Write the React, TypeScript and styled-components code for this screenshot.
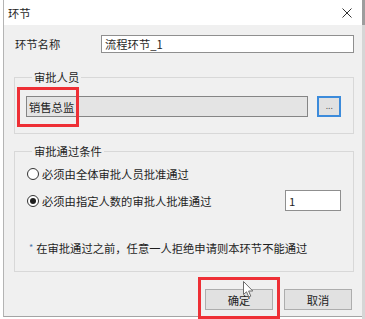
import styled, { createGlobalStyle } from 'styled-components';

const GlobalStyle = createGlobalStyle`
    html, body {
        margin: 0;
        padding: 0;
        background: #fff;
    }
    body {
        font-family: "Noto Sans CJK SC", "Noto Sans", sans-serif;
        font-size: 11.3px;
        color: #1e1e1e;
    }
`;

const Screen = styled.div`
    display: flex;
    width: 365px;
    height: 319px;
    overflow: hidden;
    background: #fff;
`;

const Window = styled.div`
    display: flex;
    flex-direction: column;
    margin-left: 3px;
    width: 359px;
    height: 317px;
    box-sizing: border-box;
    border-left: 1px solid #b4b4b4;
    border-bottom: 1px solid #a4a4a4;
`;

const RightEdge = styled.div`
    width: 3px;
    height: 319px;
    background: linear-gradient(#9d9d9d 0 25px, #d6d6d6 25px);
`;

const TitleBar = styled.div`
    display: flex;
    align-items: center;
    justify-content: space-between;
    height: 25px;
    padding-left: 4px;
    background: #fff;
    line-height: 14px;
`;

const CloseIcon = styled.svg`
    width: 10px;
    height: 10px;
    margin-right: 10px;
`;

const Body = styled.div`
    flex: 1;
    display: flex;
    flex-direction: column;
    padding: 10px 8px 0 10px;
    background: #f0f0f0;
`;

const NameRow = styled.div`
    display: flex;
    align-items: center;
    height: 18px;
`;

const Label = styled.span`
    width: 86px;
    padding-left: 1px;
    line-height: 14px;
`;

const TextInput = styled.div<{ $width?: number }>`
    ${(p) => (p.$width ? `width: ${p.$width}px;` : 'flex: 1;')}
    box-sizing: border-box;
    height: 100%;
    display: flex;
    align-items: center;
    padding-left: 3px;
    background: #fff;
    border: 1px solid #8f8f8f;
    line-height: 14px;
`;

const Group = styled.fieldset<{ $top: number }>`
    margin: ${(p) => p.$top}px 0 0 0;
    min-width: 0;
    border: 1px solid #d8d8d8;
    padding: 0 12px 16px 11px;
`;

const Legend = styled.legend`
    margin-left: 6px;
    padding: 0 2px;
    line-height: 14px;
`;

const FieldRow = styled.div`
    display: flex;
    align-items: center;
    gap: 9px;
    margin-top: 12px;
    height: 21px;
`;

const FieldWrap = styled.div`
    position: relative;
    flex: 1;
    height: 100%;
`;

const ReadonlyField = styled.div`
    box-sizing: border-box;
    height: 100%;
    display: flex;
    align-items: center;
    padding-left: 2px;
    background: #e4e4e4;
    border: 1px solid #858585;
    line-height: 14px;
`;

const Highlight = styled.div<{ $left: number; $top: number; $w: number; $h: number }>`
    position: absolute;
    left: ${(p) => p.$left}px;
    top: ${(p) => p.$top}px;
    width: ${(p) => p.$w}px;
    height: ${(p) => p.$h}px;
    box-sizing: border-box;
    border: 3px solid #ee2f35;
    pointer-events: none;
`;

const BrowseButton = styled.div`
    box-sizing: border-box;
    width: 24px;
    height: 21px;
    display: flex;
    align-items: flex-end;
    justify-content: center;
    padding-bottom: 4px;
    background: #e1e1e1;
    border: 2px solid #3c8bdb;
    color: #555;
    font-family: "DejaVu Sans", sans-serif;
    font-size: 9px;
    line-height: 9px;
    letter-spacing: -0.5px;
`;

const Options = styled.div`
    display: flex;
    flex-direction: column;
    gap: 7px;
    padding-top: 7px;
`;

const OptionRow = styled.div<{ $h: number }>`
    display: flex;
    align-items: center;
    justify-content: space-between;
    height: ${(p) => p.$h}px;
`;

const RadioLabel = styled.label`
    display: flex;
    align-items: center;
    gap: 3px;
    line-height: 14px;
`;

const Radio = styled.span<{ $checked?: boolean }>`
    box-sizing: border-box;
    width: 12px;
    height: 12px;
    margin-left: 1px;
    border-radius: 50%;
    border: 1px solid #333;
    background: #fff;
    display: flex;
    align-items: center;
    justify-content: center;

    &::after {
        content: '';
        width: 6px;
        height: 6px;
        border-radius: 50%;
        background: ${(p) => (p.$checked ? '#1e1e1e' : 'transparent')};
    }
`;

const Note = styled.div`
    margin: 30px 0 0 3px;
    line-height: 14px;
    display: flex;
    align-items: center;
    gap: 3px;
`;

const Star = styled.span`
    color: #4a76a8;
    font-size: 9px;
`;

const ButtonRow = styled.div`
    display: flex;
    justify-content: flex-end;
    gap: 11px;
    margin-top: 17px;
    padding-right: 2px;
`;

const ButtonWrap = styled.div`
    position: relative;
`;

const DialogButton = styled.div`
    box-sizing: border-box;
    width: 68px;
    height: 21px;
    display: flex;
    align-items: center;
    justify-content: center;
    background: #e1e1e1;
    border: 1px solid #adadad;
    line-height: 14px;
`;

const Cursor = styled.svg`
    position: absolute;
    left: 38px;
    top: -8px;
    width: 11px;
    height: 17px;
`;

const App = () => {
    return (
        <>
            <GlobalStyle />
            <Screen>
                <Window>
                    <TitleBar>
                        <span>环节</span>
                        <CloseIcon viewBox="0 0 10 10">
                            <path d="M0.5 0.5 L9.5 9.5 M9.5 0.5 L0.5 9.5" stroke="#333" strokeWidth="1" />
                        </CloseIcon>
                    </TitleBar>
                    <Body>
                        <NameRow>
                            <Label>环节名称</Label>
                            <TextInput>流程环节_1</TextInput>
                        </NameRow>

                        <Group $top={17}>
                            <Legend>审批人员</Legend>
                            <FieldRow>
                                <FieldWrap>
                                    <ReadonlyField>销售总监</ReadonlyField>
                                    <Highlight $left={-9} $top={-9} $w={62} $h={40} />
                                </FieldWrap>
                                <BrowseButton>...</BrowseButton>
                            </FieldRow>
                        </Group>

                        <Group $top={10}>
                            <Legend>审批通过条件</Legend>
                            <Options>
                                <OptionRow $h={18}>
                                    <RadioLabel>
                                        <Radio />
                                        必须由全体审批人员批准通过
                                    </RadioLabel>
                                </OptionRow>
                                <OptionRow $h={21}>
                                    <RadioLabel>
                                        <Radio $checked />
                                        必须由指定人数的审批人批准通过
                                    </RadioLabel>
                                    <TextInput $width={56}>1</TextInput>
                                </OptionRow>
                            </Options>
                            <Note>
                                <Star>*</Star>
                                在审批通过之前，任意一人拒绝申请则本环节不能通过
                            </Note>
                        </Group>

                        <ButtonRow>
                            <ButtonWrap>
                                <DialogButton>确定</DialogButton>
                                <Highlight $left={-7} $top={-12} $w={82} $h={42} />
                                <Cursor viewBox="0 0 11 17">
                                    <path
                                        d="M0.5 0.5 L0.5 13.5 L3.5 10.8 L5.8 16 L7.8 15.1 L5.6 10 L9.8 10 Z"
                                        fill="#fff"
                                        stroke="#6a6a6a"
                                        strokeWidth="1"
                                        strokeLinejoin="round"
                                    />
                                </Cursor>
                            </ButtonWrap>
                            <DialogButton>取消</DialogButton>
                        </ButtonRow>
                    </Body>
                </Window>
                <RightEdge />
            </Screen>
        </>
    );
};

export default App;
